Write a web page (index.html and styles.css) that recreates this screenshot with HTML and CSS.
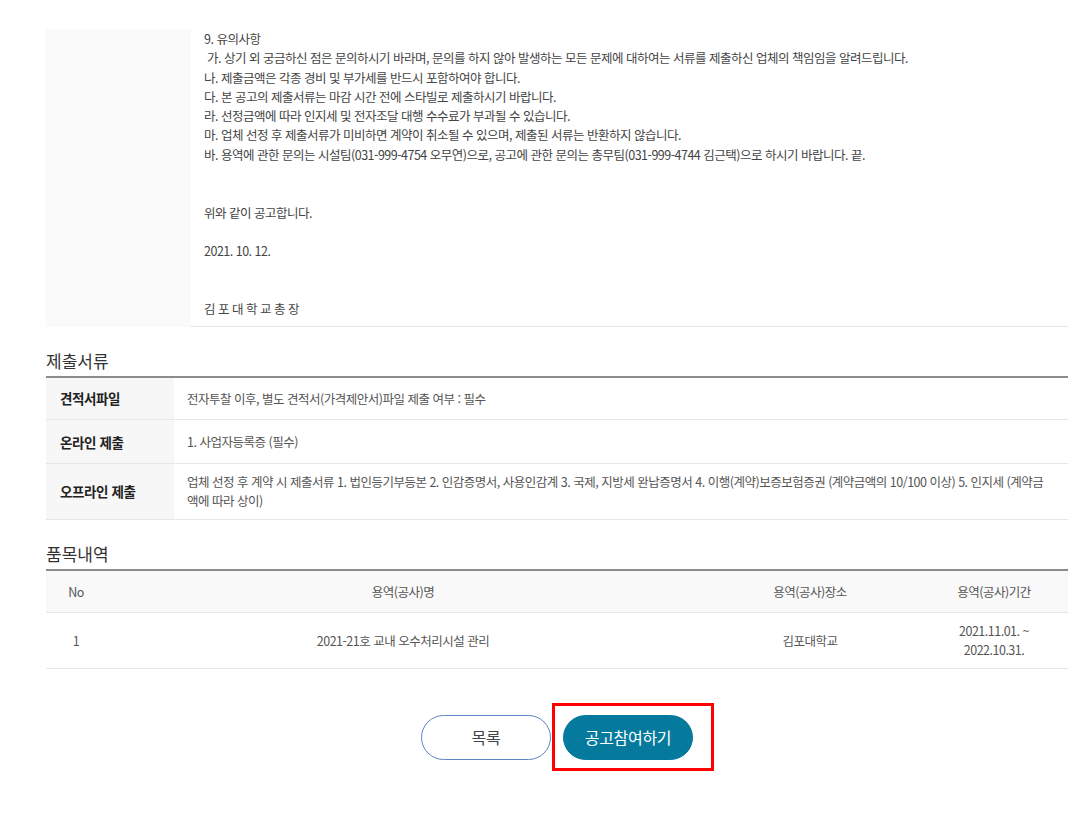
FILE: index.html
```html
<!DOCTYPE html>
<html lang="ko">
<head>
    <meta charset="UTF-8">
    <meta name="viewport" content="width=device-width, initial-scale=1.0">
    <title>공고 상세</title>
    <link rel="stylesheet" href="styles.css">
</head>
<body>
    <div class="container">
        <table class="notice">
            <tr>
                <th></th>
                <td>
                    9. 유의사항<br>
                    &nbsp;가. 상기 외 궁금하신 점은 문의하시기 바라며, 문의를 하지 않아 발생하는 모든 문제에 대하여는 서류를 제출하신 업체의 책임임을 알려드립니다.<br>
                    나. 제출금액은 각종 경비 및 부가세를 반드시 포함하여야 합니다.<br>
                    다. 본 공고의 제출서류는 마감 시간 전에 스타빌로 제출하시기 바랍니다.<br>
                    라. 선정금액에 따라 인지세 및 전자조달 대행 수수료가 부과될 수 있습니다.<br>
                    마. 업체 선정 후 제출서류가 미비하면 계약이 취소될 수 있으며, 제출된 서류는 반환하지 않습니다.<br>
                    바. 용역에 관한 문의는 시설팀(031-999-4754 오무연)으로, 공고에 관한 문의는 총무팀(031-999-4744 김근택)으로 하시기 바랍니다. 끝.<br>
                    <br>
                    <br>
                    위와 같이 공고합니다.<br>
                    <br>
                    2021. 10. 12.<br>
                    <br>
                    <br>
                    김 포 대 학 교 총 장
                </td>
            </tr>
        </table>

        <h2 class="section-title">제출서류</h2>
        <table class="docs">
            <tr>
                <th>견적서파일</th>
                <td>전자투찰 이후, 별도 견적서(가격제안서)파일 제출 여부 : 필수</td>
            </tr>
            <tr class="tall">
                <th>온라인 제출</th>
                <td>1. 사업자등록증 (필수)</td>
            </tr>
            <tr>
                <th>오프라인 제출</th>
                <td class="wrap">업체 선정 후 계약 시 제출서류 1. 법인등기부등본 2. 인감증명서, 사용인감계 3. 국제, 지방세 완납증명서 4. 이행(계약)보증보험증권 (계약금액의 10/100 이상) 5. 인지세 (계약금액에 따라 상이)</td>
            </tr>
        </table>

        <h2 class="section-title">품목내역</h2>
        <table class="items">
            <thead>
                <tr>
                    <th class="col-no">No</th>
                    <th class="col-name">용역(공사)명</th>
                    <th class="col-place">용역(공사)장소</th>
                    <th class="col-period">용역(공사)기간</th>
                </tr>
            </thead>
            <tbody>
                <tr>
                    <td class="col-no">1</td>
                    <td>2021-21호 교내 오수처리시설 관리</td>
                    <td>김포대학교</td>
                    <td>2021.11.01. ~<br>2022.10.31.</td>
                </tr>
            </tbody>
        </table>

        <div class="btn-area">
            <a href="#" class="btn btn-line">목록</a>
            <span class="btn-wrap">
                <a href="#" class="btn btn-fill">공고참여하기</a>
                <span class="highlight"></span>
            </span>
        </div>
    </div>
</body>
</html>
```

FILE: styles.css
```css
body {
    margin: 0;
    font-family: "Noto Sans CJK KR", "Noto Sans", sans-serif;
    color: #444;
    background: #fff;
}

.container {
    width: 1022px;
    margin-left: 46px;
    padding-top: 29px;
    padding-bottom: 40px;
}

table {
    width: 100%;
    border-collapse: collapse;
}

/* 공고 본문 */
.notice th {
    width: 145px;
    background: #fafafa;
    padding: 0;
}

.notice td {
    padding: 0 0 8px 13px;
    font-size: 12.5px;
    line-height: 19.3px;
    letter-spacing: -0.5px;
    color: #444;
    border-bottom: 1px solid #e6e6e6;
    vertical-align: top;
}

.section-title {
    margin: 22px 0 0;
    padding-bottom: 3px;
    font-size: 17px;
    font-weight: normal;
    line-height: 24px;
    color: #333;
    border-bottom: 2px solid #8c8c8c;
}

/* 제출서류 */
.docs th {
    width: 128px;
    padding: 8px 0 9px 14px;
    box-sizing: border-box;
    background: #f7f7f7;
    text-align: left;
    font-size: 13.5px;
    font-weight: bold;
    line-height: 24px;
    letter-spacing: -0.4px;
    color: #222;
    border-bottom: 1px solid #e6e6e6;
}

.docs td {
    padding: 8px 13px 9px;
    font-size: 12.5px;
    line-height: 19px;
    letter-spacing: -0.5px;
    color: #555;
    border-bottom: 1px solid #e6e6e6;
}

.docs td.wrap {
    padding-right: 20px;
}

.docs .tall th {
    padding-top: 10px;
    padding-bottom: 9px;
}

/* 품목내역 */
.items th {
    height: 41px;
    padding: 0;
    background: #f9f9f9;
    font-size: 12.5px;
    font-weight: normal;
    letter-spacing: -0.5px;
    color: #555;
    border-bottom: 1px solid #e6e6e6;
}

.items td {
    padding: 8px 0 9px;
    text-align: center;
    font-size: 12.5px;
    line-height: 19px;
    letter-spacing: -0.5px;
    color: #555;
    border-bottom: 1px solid #e6e6e6;
}

.items .col-no {
    width: 60px;
}

.items .col-place {
    width: 220px;
}

.items .col-period {
    width: 148px;
}

/* 버튼 */
.btn-area {
    display: flex;
    justify-content: center;
    gap: 12px;
    margin-top: 46px;
}

.btn-wrap {
    position: relative;
    display: block;
}

.btn {
    display: block;
    width: 130px;
    height: 45px;
    box-sizing: border-box;
    border-radius: 23px;
    font-size: 16px;
    line-height: 43px;
    letter-spacing: -0.3px;
    text-align: center;
    text-decoration: none;
}

.btn-line {
    border: 1px solid #5d86c2;
    color: #444;
    background: #fff;
}

.btn-fill {
    border: 1px solid #057a9c;
    background: #057a9c;
    color: #fff;
}

.highlight {
    position: absolute;
    left: -11px;
    top: -12px;
    right: -21px;
    bottom: -11px;
    border: 3px solid #ff0000;
    pointer-events: none;
}
```
